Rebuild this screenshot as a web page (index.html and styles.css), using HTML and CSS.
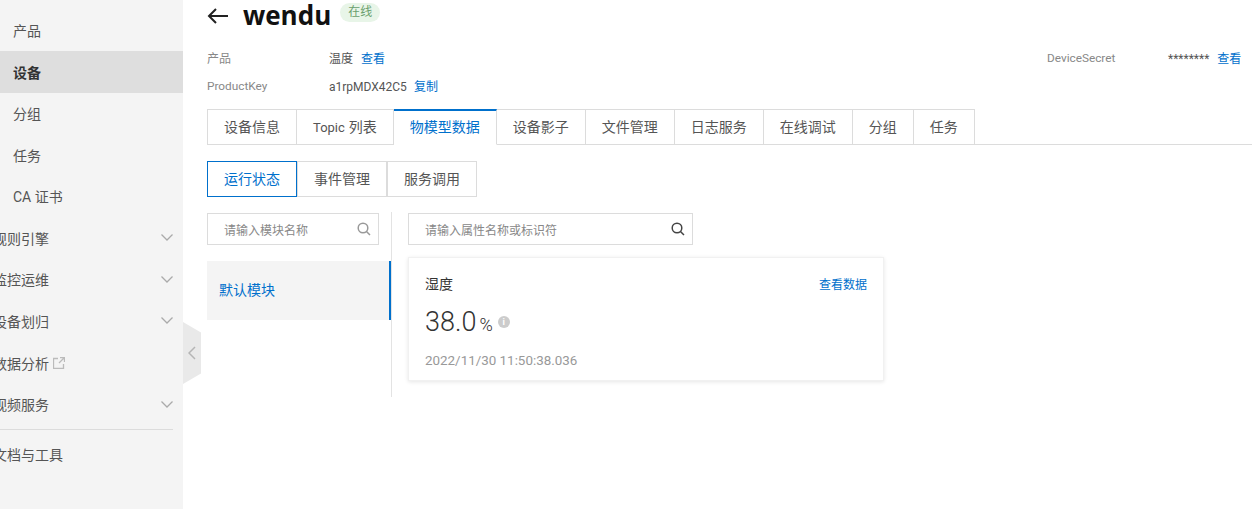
FILE: index.html
```html
<!DOCTYPE html>
<html lang="en">
<head>
    <meta charset="UTF-8">
    <meta name="viewport" content="width=device-width, initial-scale=1.0">
    <title>wendu</title>
    <link rel="stylesheet" href="styles.css">
</head>
<body>
    <aside class="sidebar">
        <a class="nav-item">产品</a>
        <a class="nav-item active">设备</a>
        <a class="nav-item">分组</a>
        <a class="nav-item">任务</a>
        <a class="nav-item">CA 证书</a>
        <a class="nav-item top">规则引擎
            <svg class="chevron" viewBox="0 0 12 7"><path d="M.5.5 6 6 11.5.5"/></svg>
        </a>
        <a class="nav-item top">监控运维
            <svg class="chevron" viewBox="0 0 12 7"><path d="M.5.5 6 6 11.5.5"/></svg>
        </a>
        <a class="nav-item top">设备划归
            <svg class="chevron" viewBox="0 0 12 7"><path d="M.5.5 6 6 11.5.5"/></svg>
        </a>
        <a class="nav-item top">数据分析
            <svg class="ext-icon" viewBox="0 0 12 12"><path d="M5 1.500H.5v10h10V7M7 .5h4.500V5M11 1 6 6"/></svg>
        </a>
        <a class="nav-item top">视频服务
            <svg class="chevron" viewBox="0 0 12 7"><path d="M.5.5 6 6 11.5.5"/></svg>
        </a>
        <div class="nav-line"></div>
        <a class="nav-item top">文档与工具</a>
    </aside>

    <div class="collapse-tab">
        <svg viewBox="0 0 8 14"><path d="M7 1 1 7l6 6"/></svg>
    </div>

    <main class="main">
        <div class="title-row">
            <svg class="back" viewBox="0 0 22 16"><path d="M21 8H2M9 1 2 8l7 7"/></svg>
            <h1>wendu</h1>
            <span class="tag">在线</span>
        </div>

        <div class="meta">
            <span class="label">产品</span>
            <span class="value">温度<a>查看</a></span>
            <span class="label en">DeviceSecret</span>
            <span class="value secret">********<a>查看</a></span>
            <span class="label en">ProductKey</span>
            <span class="value">a1rpMDX42C5<a class="copy">复制</a></span>
        </div>

        <div class="tabs">
            <a class="tab">设备信息</a>
            <a class="tab"><span class="latin">Topic</span> 列表</a>
            <a class="tab active">物模型数据</a>
            <a class="tab">设备影子</a>
            <a class="tab">文件管理</a>
            <a class="tab">日志服务</a>
            <a class="tab">在线调试</a>
            <a class="tab">分组</a>
            <a class="tab">任务</a>
        </div>

        <div class="subtabs">
            <a class="subtab active">运行状态</a>
            <a class="subtab">事件管理</a>
            <a class="subtab">服务调用</a>
        </div>

        <div class="content">
            <div class="modules">
                <div class="search module-search">
                    <span>请输入模块名称</span>
                    <svg viewBox="0 0 14 14"><circle cx="6" cy="6" r="4.800"/><path d="m9.500 9.500 3.500 3.500"/></svg>
                </div>
                <div class="module active">默认模块</div>
            </div>
            <div class="props">
                <div class="search prop-search">
                    <span>请输入属性名称或标识符</span>
                    <svg viewBox="0 0 14 14"><circle cx="6" cy="6" r="4.800"/><path d="m9.500 9.500 3.500 3.500"/></svg>
                </div>
                <div class="card">
                    <div class="card-head">
                        <span>湿度</span>
                        <a>查看数据</a>
                    </div>
                    <div class="reading">
                        <span class="number">38.0</span>
                        <span class="unit">%</span>
                        <span class="info">i</span>
                    </div>
                    <div class="time">2022/11/30 11:50:38.036</div>
                </div>
            </div>
        </div>
    </main>
</body>
</html>
```

FILE: styles.css
```css
* {
    box-sizing: border-box;
}
html, body {
    height: 100%;
}
body {
    margin: 0;
    display: flex;
    overflow: hidden;
    font-family: "Roboto", "Noto Sans CJK SC", sans-serif;
    font-size: 12px;
    color: #333;
    background: #fff;
}
a {
    color: #0070cc;
}

/* sidebar */
.sidebar {
    position: relative;
    flex: 0 0 183px;
    padding-top: 9px;
    background: #f4f4f4;
    overflow: hidden;
}
.nav-item {
    display: flex;
    align-items: center;
    height: 41.6px;
    padding-left: 13px;
    font-size: 14px;
    color: #555;
    white-space: nowrap;
}
.nav-item.active {
    height: 42px;
    margin-bottom: -0.4px;
    font-weight: bold;
    color: #333;
    background: #dedede;
}
.nav-item.top {
    margin-left: -7px;
    padding-left: 0;
}
.chevron {
    position: absolute;
    left: 161px;
    width: 12px;
    height: 7px;
    fill: none;
    stroke: #aaa;
    stroke-width: 1.300;
}
.ext-icon {
    width: 12px;
    height: 12px;
    margin-left: 4px;
    fill: none;
    stroke: #bbb;
    stroke-width: 1.300;
}
.nav-line {
    width: 173px;
    height: 1px;
    margin: 4px 0 3px;
    background: #dcdcdc;
}
.collapse-tab {
    position: absolute;
    left: 183px;
    top: 322px;
    width: 18px;
    height: 62px;
    display: flex;
    align-items: center;
    justify-content: center;
    background: #e9e9e9;
    clip-path: polygon(0 0, 100% 17%, 100% 83%, 0 100%);
}
.collapse-tab svg {
    width: 8px;
    height: 14px;
    fill: none;
    stroke: #b5b5b5;
    stroke-width: 1.500;
}

/* header */
.main {
    flex: 1;
    min-width: 0;
    padding-left: 24px;
}
.title-row {
    display: flex;
    align-items: center;
    height: 31px;
}
.back {
    width: 22px;
    height: 16px;
    margin-top: 1px;
    fill: none;
    stroke: #222;
    stroke-width: 2;
}
h1 {
    margin: 0 9px 0 14px;
    font-family: "Open Sans", sans-serif;
    font-size: 26px;
    line-height: 31px;
    font-weight: bold;
    color: #111;
}
.tag {
    align-self: flex-start;
    margin-top: 3px;
    width: 40px;
    height: 19px;
    line-height: 19px;
    border-radius: 10px;
    text-align: center;
    color: #6a9f6d;
    background: #e8f5e8;
}
.meta {
    display: grid;
    grid-template-columns: 122px 1fr 121px 84px;
    grid-auto-rows: 28px;
    align-items: center;
    margin-top: 12px;
}
.label {
    color: #888;
}
.label.en {
    padding-top: 2px;
    font-size: 11.800px;
}
.value {
    color: #555;
}
.value a {
    margin-left: 8px;
}
.value a.copy {
    margin-left: 7px;
}
.secret {
    white-space: nowrap;
}

/* tabs */
.tabs {
    display: flex;
    height: 36px;
    margin-top: 10px;
    border-bottom: 1px solid #dcdcdc;
}
.tab {
    height: 36px;
    padding: 0 16px;
    line-height: 34px;
    font-size: 14px;
    word-spacing: 0.500px;
    color: #555;
    background: #fff;
    border: 1px solid #dcdcdc;
    border-left: 0;
    white-space: nowrap;
}
.tab .latin {
    font-size: 13px;
}
.tab:first-child {
    border-left: 1px solid #dcdcdc;
}
.tab.active {
    color: #0070cc;
    border-top: 2px solid #0070cc;
    border-bottom-color: #fff;
    line-height: 33px;
}
.subtabs {
    display: flex;
    margin-top: 16px;
}
.subtab {
    width: 90px;
    height: 36px;
    line-height: 34px;
    text-align: center;
    font-size: 14px;
    color: #555;
    border: 1px solid #dcdcdc;
}
.subtab.active {
    color: #0070cc;
    border-color: #0070cc;
}

/* module list and properties */
.content {
    display: flex;
    margin-top: 15px;
}
.modules {
    width: 185px;
    height: 185px;
    border-right: 1px solid #e3e3e3;
}
.search {
    display: flex;
    align-items: center;
    justify-content: space-between;
    height: 32px;
    padding: 0 7px 0 16px;
    margin-top: 1px;
    color: #888;
    border: 1px solid #dcdcdc;
}
.search svg {
    width: 14px;
    height: 14px;
    fill: none;
    stroke: #444;
    stroke-width: 1.500;
}
.module-search {
    width: 172px;
}
.module-search svg {
    stroke: #999;
}
.prop-search {
    width: 285px;
}
.module {
    display: flex;
    align-items: center;
    height: 59px;
    margin-top: 16px;
    padding: 0 0 3px 12px;
    font-size: 14px;
}
.module.active {
    color: #0070cc;
    background: #f4f4f4;
    border-right: 2px solid #0070cc;
}
.props {
    padding-left: 16px;
}
.card {
    width: 476px;
    height: 124px;
    margin-top: 12px;
    padding: 16px 16px 0;
    background: #fff;
    border: 1px solid #f1f1f1;
    box-shadow: 0 1px 4px rgba(0, 0, 0, 0.1);
}
.card-head {
    display: flex;
    align-items: center;
    justify-content: space-between;
    height: 18px;
    font-size: 14px;
}
.card-head a {
    font-size: 12px;
}
.reading {
    display: flex;
    align-items: baseline;
    height: 38px;
    margin-top: 11px;
}
.number {
    font-size: 27px;
    line-height: 38px;
    font-weight: 300;
}
.unit {
    margin-left: 3px;
    font-size: 18px;
    font-weight: 300;
}
.info {
    align-self: center;
    width: 12px;
    height: 12px;
    margin-left: 5px;
    border-radius: 50%;
    background: #ccc;
    color: #fff;
    font-size: 9px;
    font-weight: bold;
    line-height: 12px;
    text-align: center;
}
.time {
    margin-top: 12px;
    font-size: 13.400px;
    color: #999;
}
```
